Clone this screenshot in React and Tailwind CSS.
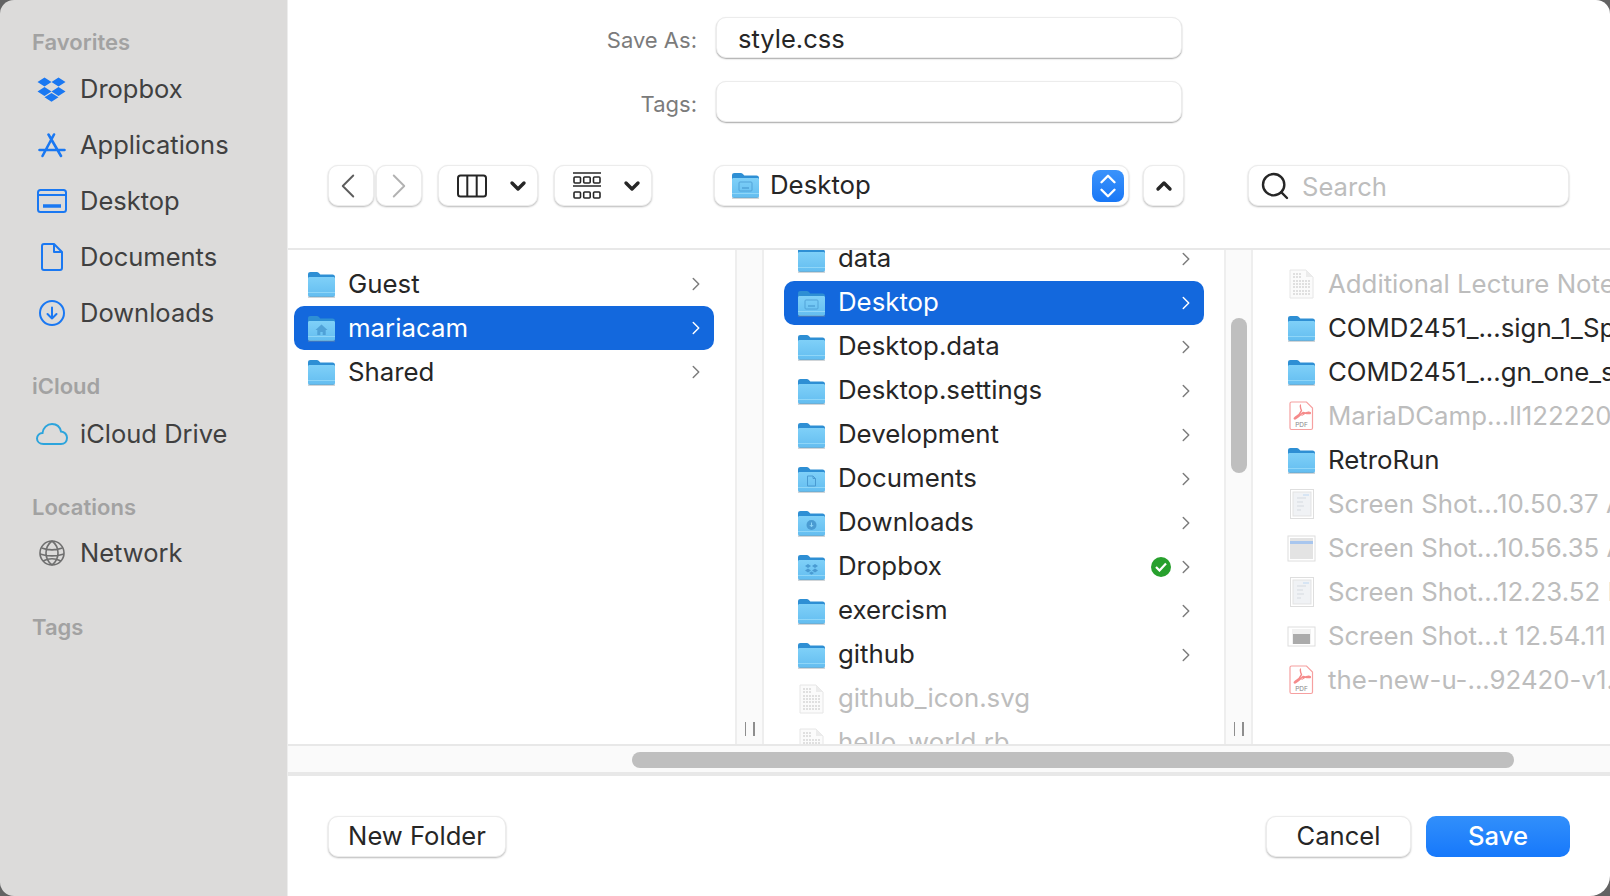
import { ChevronDown, ChevronRight, ChevronLeft, ChevronUp, Search } from "lucide-react";

const sfFont = "[font-family:Inter,'Liberation_Sans',sans-serif]";

// macOS style folder, glyph is the faint emblem on it
function Folder({ glyph }) {
  return (
    <svg width="29" height="27" viewBox="0 0 29 27" className="shrink-0">
      <defs>
        <linearGradient id="folderBody" x1="0" y1="0" x2="0" y2="1">
          <stop offset="0" stopColor="#7fd0f8" />
          <stop offset="1" stopColor="#63bdf0" />
        </linearGradient>
      </defs>
      <path d="M1 3.5C1 1.8 1.8 1 3.5 1h6.2c1 0 1.6.4 2.2 1l1.4 1.5h12.2c1.6 0 2.5.9 2.5 2.5v3H1z" fill="#2e8fd4" />
      <path d="M1 7.5c0-1 .7-1.5 1.6-1.5h23.8c.9 0 1.6.5 1.6 1.5V24c0 1.2-.7 2-2 2H3c-1.3 0-2-.8-2-2z" fill="url(#folderBody)" />
      <rect x="1" y="21" width="27" height="1" fill="#8fd6f8" />
      <rect x="1" y="25.6" width="27" height="1" fill="#7f8a92" opacity="0.6" />
      {glyph === "desktop" && (
        <g fill="none" stroke="#4a9bd2" strokeWidth="1" opacity="0.8">
          <rect x="8" y="10" width="13" height="9" rx="1" />
          <path d="M11 16h7" strokeWidth="1.5" />
        </g>
      )}
      {glyph === "home" && <path d="M14.5 9.5l-6 5.5h1.8v5h3v-3h2.4v3h3v-5h1.8z" fill="#4a9bd2" opacity="0.85" />}
      {glyph === "doc" && <path d="M10.5 10h5.5l2.5 2.5V20h-8zM16 10v2.5h2.5" fill="none" stroke="#4a9bd2" />}
      {glyph === "download" && (
        <g>
          <circle cx="14.5" cy="15" r="5" fill="#4a9bd2" />
          <path d="M14.5 12.5v4M12.8 15l1.7 1.8 1.7-1.8" stroke="#8fd6f8" fill="none" />
        </g>
      )}
      {glyph === "dropbox" && (
        <path d="M11 10l3 2-3 2-3-2zM18 10l3 2-3 2-3-2zM11 14.6l3 2-3 2-3-2zM18 14.6l3 2-3 2-3-2zM14.5 17.5l2.5 1.6-2.5 1.6-2.5-1.6z" fill="#4a9bd2" />
      )}
    </svg>
  );
}

// Dimmed plain document thumbnail
function DocIcon() {
  return (
    <svg width="29" height="30" viewBox="0 0 29 30" className="shrink-0">
      <path d="M3 1h16l7 7v21H3z" fill="#fbfbfb" stroke="#e6e6e6" />
      <path d="M19 1v7h7z" fill="#ececec" />
      <path d="M6 5h9M6 8h9M6 12h17M6 15h17M6 18h17M6 22h17M6 25h17" stroke="#d8d8d8" strokeWidth="1.5" strokeDasharray="2 1" />
    </svg>
  );
}

function PdfIcon() {
  return (
    <svg width="29" height="30" viewBox="0 0 29 30" className="shrink-0">
      <path d="M4.5 1h15l6 6v20c0 1-.5 1.5-1.5 1.5H4.5c-1 0-1.5-.5-1.5-1.5V2.500C3 1.500 3.500 1 4.500 1z" fill="#fff" stroke="#f6a0a0" strokeWidth="1.2" />
      <path d="M14 4c-1 0-.8 3 .5 5.500C13.500 12 11 15 8 16.500c-1.500 1-.5 2 1 1 3-2 6-5 7-6 2 .5 5 1.500 7 1 1-.5 0-1.500-2-1.200-3 .2-6 3-6 2.700" fill="none" stroke="#f58a8a" strokeWidth="1.4" />
      <text x="14.5" y="26" textAnchor="middle" fontSize="6.5" fill="#8a8a8a" fontFamily="Inter, sans-serif">PDF</text>
    </svg>
  );
}

function ShotIcon({ kind }) {
  if (kind === "tall") {
    return (
      <svg width="29" height="30" viewBox="0 0 29 30" className="shrink-0">
        <rect x="3.5" y="0.5" width="23" height="29" fill="#fff" stroke="#dedede" />
        <rect x="6" y="3" width="18" height="24" fill="#f0f2f5" stroke="#e3e3e3" />
        <path d="M10 9h9M10 13h6M10 17h7M10 21h4" stroke="#d5dae0" strokeWidth="1" />
        <path d="M16 6h6" stroke="#cfe0f3" strokeWidth="1.5" />
      </svg>
    );
  }
  if (kind === "wide") {
    return (
      <svg width="29" height="27" viewBox="0 0 29 27" className="shrink-0">
        <rect x="1" y="1" width="27" height="25" fill="#fff" stroke="#dedede" />
        <rect x="3" y="3" width="23" height="21" fill="#e3e3e3" />
        <rect x="3" y="6" width="23" height="3" fill="#a8c6ee" />
      </svg>
    );
  }
  return (
    <svg width="29" height="21" viewBox="0 0 29 21" className="shrink-0">
      <rect x="1" y="1" width="27" height="19" fill="#fff" stroke="#dedede" />
      <rect x="5" y="3" width="19" height="15" fill="#f1f1f1" />
      <rect x="6" y="8" width="17" height="10" fill="#ababab" />
    </svg>
  );
}

function SideItem({ icon, label }) {
  return (
    <div className="flex h-[56px] items-center">
      <div className="flex w-[80px] shrink-0 items-center justify-center pl-[32px] pr-[8px]">{icon}</div>
      <span className="text-[25.5px] text-[#404040]">{label}</span>
    </div>
  );
}

function SideHeading({ children, className }) {
  return <div className={`pl-[32px] text-[22px] font-semibold text-[#a2a2a2] ${className}`}>{children}</div>;
}

function Sidebar() {
  const blue = "#1a78f2";
  return (
    <aside className="flex h-full w-[287px] shrink-0 flex-col bg-[#dcdbda] pt-[26px]">
      <SideHeading>Favorites</SideHeading>
      <div className="mt-[2px]">
        <SideItem
          label="Dropbox"
          icon={
            <svg width="29" height="25" viewBox="0 0 29 25" fill={blue} className="shrink-0 -translate-x-px">
              <path d="M7.5 0.5L14.5 5 7.5 9.5.5 5zM21.5 0.5L28.5 5l-7 4.5-7-4.500zM7.5 10l7 4.5-7 4.5-7-4.500zM21.5 10l7 4.5-7 4.5-7-4.500zM14.5 16l7 4.3-7 4.5-7-4.500z" />
            </svg>
          }
        />
        <SideItem
          label="Applications"
          icon={
            <svg width="28" height="25" viewBox="0 0 28 25" fill="none" stroke={blue} strokeWidth="2.6" strokeLinecap="round" className="shrink-0">
              <path d="M10.5 1.500l12.500 21.500M16 1.500L4.500 23M1.500 17h25" />
            </svg>
          }
        />
        <SideItem
          label="Desktop"
          icon={
            <svg width="30" height="24" viewBox="0 0 30 24" fill="none" stroke={blue} strokeWidth="2" className="shrink-0">
              <rect x="1" y="1" width="28" height="22" rx="2.5" />
              <path d="M1 6h28" />
              <path d="M6 17h18" strokeWidth="3.5" />
            </svg>
          }
        />
        <SideItem
          label="Documents"
          icon={
            <svg width="22" height="28" viewBox="0 0 22 28" fill="none" stroke={blue} strokeWidth="2" strokeLinejoin="round" className="shrink-0">
              <path d="M3 1h10l8 8v16c0 1.3-.7 2-2 2H3c-1.3 0-2-.7-2-2V3c0-1.3.7-2 2-2z" />
              <path d="M13 1v8h8" />
            </svg>
          }
        />
        <SideItem
          label="Downloads"
          icon={
            <svg width="26" height="26" viewBox="0 0 26 26" fill="none" stroke={blue} strokeWidth="2" strokeLinecap="round" strokeLinejoin="round" className="shrink-0">
              <circle cx="13" cy="13" r="12" />
              <path d="M13 7.5v11M8.5 14l4.5 4.5 4.5-4.500" />
            </svg>
          }
        />
      </div>
      <SideHeading className="mt-[29px]">iCloud</SideHeading>
      <div className="mt-[3px]">
        <SideItem
          label="iCloud Drive"
          icon={
            <svg width="32" height="22" viewBox="0 0 32 22" fill="none" stroke="#2ca4dc" strokeWidth="2" className="shrink-0">
              <path d="M7.5 21C3.5 21 1 18.5 1 15.5 1 12.5 3.5 10 6.5 10c.5-5 4.5-9 9.5-9 4.5 0 8 3 9 7.5 3.5.2 6 3 6 6.3 0 3.5-2.5 6.200-6 6.200z" />
            </svg>
          }
        />
      </div>
      <SideHeading className="mt-[29px]">Locations</SideHeading>
      <div className="mt-[1px]">
        <SideItem
          label="Network"
          icon={
            <svg width="26" height="26" viewBox="0 0 26 26" fill="none" stroke="#6f6f6f" strokeWidth="1.6" className="shrink-0">
              <circle cx="13" cy="13" r="12" />
              <path d="M13 1c-4 3-6 7-6 12s2 9 6 12M13 1c4 3 6 7 6 12s-2 9-6 12M2.5 8c7 2.5 14 2.5 21 0M1 14c8 2.5 16 2.5 24 0M4 21c6-3 12-3 18 0" />
            </svg>
          }
        />
      </div>
      <SideHeading className="mt-[30px]">Tags</SideHeading>
    </aside>
  );
}

// Shared look of the raised white mac controls
const control = "rounded-[10px] border border-[#ececec] bg-white shadow-[0_1px_2px_rgba(0,0,0,0.28)]";

function FormRow({ label, value, className }) {
  return (
    <div className={`flex items-center ${className}`}>
      <div className="w-[409px] pt-[6px] text-right text-[22px] text-[#7b7b7b]">{label}</div>
      <div className="ml-[19px] flex h-[41px] w-[466px] items-center rounded-[10px] border border-[#ececec] bg-white pl-[21px] pt-[3px] text-[25.5px] text-[#262626] shadow-[0_1px_1.5px_rgba(0,0,0,0.35)]">
        {value}
      </div>
    </div>
  );
}

function Toolbar() {
  return (
    <div className="mt-[43px] flex h-[41px] items-stretch pl-[40px]">
      <div className={`flex w-[46px] items-center justify-center pr-[6px] ${control}`}>
        <ChevronLeft size={42} strokeWidth={1.1} color="#5d5d5d" className="shrink-0" />
      </div>
      <div className={`ml-[2px] flex w-[46px] items-center justify-center ${control}`}>
        <ChevronRight size={42} strokeWidth={1.1} color="#b2b2b2" className="shrink-0" />
      </div>
      <div className={`ml-[16px] flex w-[100px] items-center justify-between pl-[18px] pr-[7px] ${control}`}>
        <svg width="30" height="24" viewBox="0 0 30 24" fill="none" stroke="#262626" strokeWidth="2">
          <rect x="1" y="1.5" width="28" height="21" rx="2.5" />
          <path d="M10.3 1.5v21M19.7 1.5v21" />
        </svg>
        <ChevronDown size={24} strokeWidth={3.4} color="#262626" />
      </div>
      <div className={`ml-[16px] flex w-[98px] items-center justify-between pl-[18px] pr-[7px] ${control}`}>
        <svg width="28" height="27" viewBox="0 0 28 27" fill="none" stroke="#262626" strokeWidth="1.6">
          <path d="M0 1h28" strokeWidth="1.5" />
          <rect x="1" y="5" width="6.5" height="6" rx="1" />
          <rect x="10.7" y="5" width="6.5" height="6" rx="1" />
          <rect x="20.5" y="5" width="6.5" height="6" rx="1" />
          <path d="M0 14h28" strokeWidth="1.5" />
          <rect x="1" y="20" width="6.5" height="6" rx="1" />
          <rect x="10.7" y="20" width="6.5" height="6" rx="1" />
          <rect x="20.5" y="20" width="6.5" height="6" rx="1" />
        </svg>
        <ChevronDown size={24} strokeWidth={3.4} color="#262626" />
      </div>
      <div className={`ml-[62px] flex w-[415px] items-center pl-[16px] pr-[4px] ${control}`}>
        <Folder glyph="desktop" />
        <span className="ml-[10px] flex-1 text-[25.8px] text-[#262626]">Desktop</span>
        <div className="flex h-[32px] w-[32px] flex-col items-center justify-center rounded-[8px] bg-gradient-to-b from-[#3a93fb] to-[#1877f6]">
          <ChevronUp size={26} strokeWidth={2.2} color="#fff" className="-mb-[6px] shrink-0" />
          <ChevronDown size={26} strokeWidth={2.2} color="#fff" className="-mt-[6px] shrink-0" />
        </div>
      </div>
      <div className={`ml-[14px] flex w-[41px] items-center justify-center ${control}`}>
        <ChevronUp size={24} strokeWidth={3.4} color="#262626" />
      </div>
      <div className={`ml-[64px] flex w-[321px] items-center pl-[10px] ${control}`}>
        <Search size={32} strokeWidth={1.8} color="#262626" className="shrink-0" />
        <span className="ml-[11px] pt-[4px] text-[25.6px] text-[#bdbdbd]">Search</span>
      </div>
    </div>
  );
}

function Row({ icon, name, selected, dim, arrow, status, lift }) {
  const textColor = selected ? "text-white" : dim ? "text-[#bdbdbd]" : "text-[#262626]";
  return (
    <div className={`flex h-[44px] shrink-0 items-center rounded-[10px] pl-[13px] pr-[7px] ${selected ? "bg-[#1368dd]" : ""}`}>
      <div className="flex w-[29px] shrink-0 items-center justify-center">{icon}</div>
      <span className={`ml-[12px] flex-1 whitespace-nowrap text-[25.8px] ${lift ? "pb-[2px]" : ""} ${textColor}`}>{name}</span>
      {status && (
        <div className="mr-[4px] flex h-[20px] w-[20px] items-center justify-center rounded-full bg-[#27a02d]">
          <svg width="12" height="10" viewBox="0 0 12 10" fill="none" stroke="#fff" strokeWidth="2.2">
            <path d="M1 5l3.5 3.5L11 1.5" />
          </svg>
        </div>
      )}
      {arrow && <ChevronRight size={22} strokeWidth={1.6} color={selected ? "#fff" : "#7c7c7c"} className="shrink-0" />}
    </div>
  );
}

// Strip between two columns holding the resize handle
function ColumnGrip({ children }) {
  return (
    <div className="relative flex w-[29px] shrink-0 items-end justify-center border-x-2 border-[#eeeeee] bg-[#fafafa] pb-[8px]">
      <div className="flex gap-[7px]">
        <div className="h-[14px] w-[1.5px] bg-[#8e8e8e]" />
        <div className="h-[14px] w-[1.5px] bg-[#8e8e8e]" />
      </div>
      {children}
    </div>
  );
}

function Columns() {
  return (
    <div className="flex h-[496px] overflow-hidden border-t-2 border-[#e8e8e8]">
      <div className="w-[447px] shrink-0 pl-[6px] pr-[21px] pt-[12px]">
        <Row icon={<Folder />} name="Guest" arrow />
        <Row icon={<Folder glyph="home" />} name="mariacam" selected arrow />
        <Row icon={<Folder />} name="Shared" arrow />
      </div>
      <ColumnGrip />
      <div className="w-[460px] shrink-0 overflow-hidden px-[20px]">
        <div className="-mt-[13px]">
          <Row icon={<Folder />} name="data" arrow lift />
          <Row icon={<Folder glyph="desktop" />} name="Desktop" selected arrow lift />
          <Row icon={<Folder />} name="Desktop.data" arrow lift />
          <Row icon={<Folder />} name="Desktop.settings" arrow lift />
          <Row icon={<Folder />} name="Development" arrow lift />
          <Row icon={<Folder glyph="doc" />} name="Documents" arrow lift />
          <Row icon={<Folder glyph="download" />} name="Downloads" arrow lift />
          <Row icon={<Folder glyph="dropbox" />} name="Dropbox" arrow status lift />
          <Row icon={<Folder />} name="exercism" arrow lift />
          <Row icon={<Folder />} name="github" arrow lift />
          <Row icon={<DocIcon />} name="github_icon.svg" dim lift />
          <Row icon={<DocIcon />} name="hello_world.rb" dim lift />
        </div>
      </div>
      <ColumnGrip>
        <div className="absolute left-[5px] top-[68px] h-[155px] w-[16px] rounded-full bg-[#bfbfbf]" />
      </ColumnGrip>
      <div className="min-w-0 flex-1 overflow-hidden pl-[21px] pt-[12px]">
        <div className="w-[500px]">
          <Row icon={<DocIcon />} name="Additional Lecture Notes" dim />
          <Row icon={<Folder />} name="COMD2451_...sign_1_Spring" />
          <Row icon={<Folder />} name="COMD2451_...gn_one_spring" />
          <Row icon={<PdfIcon />} name="MariaDCamp...ll122220.pdf" dim />
          <Row icon={<Folder />} name="RetroRun" />
          <Row icon={<ShotIcon kind="tall" />} name="Screen Shot...10.50.37 AM" dim />
          <Row icon={<ShotIcon kind="wide" />} name="Screen Shot...10.56.35 AM" dim />
          <Row icon={<ShotIcon kind="tall" />} name="Screen Shot...12.23.52 PM" dim />
          <Row icon={<ShotIcon kind="flat" />} name="Screen Shot...t 12.54.11 PM" dim />
          <Row icon={<PdfIcon />} name="the-new-u-...92420-v1.pdf" dim />
        </div>
      </div>
    </div>
  );
}

function HScroll() {
  return (
    <div className="h-[32px] border-t-2 border-b-4 border-[#e8e8e8] bg-[#fafafa] pl-[344px] pt-[6px]">
      <div className="h-[16px] w-[882px] rounded-full bg-[#bfbfbf]" />
    </div>
  );
}

function Footer() {
  return (
    <div className="flex items-center pl-[40px] pr-[40px] pt-[40px]">
      <div className={`flex h-[41px] w-[178px] items-center justify-center text-[25.6px] text-[#262626] ${control}`}>New Folder</div>
      <div className={`ml-auto flex h-[41px] w-[145px] items-center justify-center text-[25.6px] text-[#262626] ${control}`}>Cancel</div>
      <div className="ml-[15px] flex h-[41px] w-[144px] items-center justify-center rounded-[10px] bg-gradient-to-b from-[#318ffb] to-[#1678fb] text-[25.6px] font-medium text-white">
        Save
      </div>
    </div>
  );
}

export default function App() {
  return (
    <div className={`h-[896px] w-[1610px] overflow-hidden bg-[#636363] ${sfFont}`}>
      <div className="flex h-full overflow-hidden rounded-[14px] rounded-br-[20px]">
        <Sidebar />
        <main className="flex min-w-0 flex-1 flex-col border-l border-[#ededed] bg-white">
          <div className="h-[248px] pt-[17px]">
            <FormRow label="Save As:" value="style.css" />
            <FormRow label="Tags:" value="" className="mt-[23px]" />
            <Toolbar />
          </div>
          <Columns />
          <HScroll />
          <Footer />
        </main>
      </div>
    </div>
  );
}
